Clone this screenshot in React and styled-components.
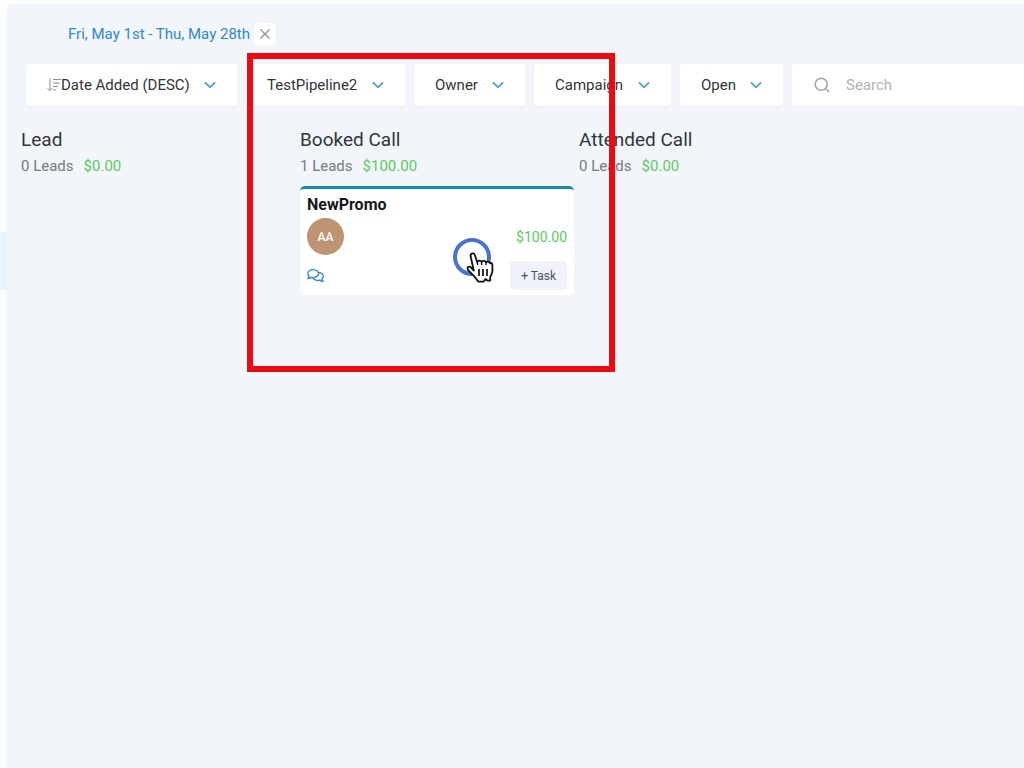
import React, { useState } from 'react';
import styled, { createGlobalStyle } from 'styled-components';
import { FaRegComments } from 'react-icons/fa';

const filters = [
    { id: 'sort', label: 'Sort by', value: 'Date Added (DESC)', sorted: true },
    { id: 'pipeline', label: 'Pipeline', value: 'TestPipeline2' },
    { id: 'owner', label: 'Owner', value: 'Owner' },
    { id: 'campaign', label: 'Campaign', value: 'Campaign' },
    { id: 'status', label: 'Status', value: 'Open' },
]

const stages = [
    { name: 'Lead', total: '$0.00', leads: [] },
    {
        name: 'Booked Call',
        total: '$100.00',
        leads: [{ id: 1, name: 'NewPromo', initials: 'AA', amount: '$100.00' }]
    },
    { name: 'Attended Call', total: '$0.00', leads: [] },
]

const SortIcon = () => (
    <svg width='14' height='14' viewBox='0 0 14 14' fill='none' stroke='#8d9196' aria-hidden='true'>
        <path d='M3 0.5V12.5M0.7 10.2L3 12.7L5.3 10.2' />
        <path d='M6 1.5H14M6 5H12.6M6 8.5H11M6 12H9' strokeWidth='1.2' />
    </svg>
)

const ChevronIcon = () => (
    <svg width='12' height='8' viewBox='0 0 12 8' fill='none' stroke='#4b9bd4' strokeWidth='1.7' aria-hidden='true'>
        <path d='M1 1.3L6 6.3L11 1.3' />
    </svg>
)

const CloseIcon = () => (
    <svg width='10' height='10' viewBox='0 0 10 10' stroke='#8f8f8f' strokeWidth='1.3' aria-hidden='true'>
        <path d='M0.5 0.5L9.5 9.5M9.5 0.5L0.5 9.5' />
    </svg>
)

const SearchIcon = () => (
    <svg width='16' height='16' viewBox='0 0 16 16' fill='none' stroke='#a3a3a3' strokeWidth='1.5' aria-hidden='true'>
        <circle cx='7.2' cy='7.2' r='6' />
        <path d='M11.5 11.5L15.2 15' />
    </svg>
)

const HandIcon = () => (
    <svg width='28' height='32' viewBox='0 0 28 32' aria-hidden='true'>
        <path
            d='M7.8 19.6L4.6 5C4.2 2 8 1.4 8.8 4L11.2 11.2C12.2 9 15 9.2 15.6 11C17 9.2 19.4 9.8 20 11.4C21.6 10 23.8 10.8 24 12.4C25.4 11.4 26.4 12.4 26.4 14.2V20C26.4 23 24.4 24.6 24.2 26.6V29.6H21.4L19.6 28L17.8 30.6H12.4L10.6 28.4C9 25.4 5 22.4 1.8 18.6C0.4 16 3.4 14.6 5.2 16.6L7.8 19.6Z'
            fill='#fff'
            stroke='#111'
            strokeWidth='1.8'
            strokeLinejoin='round'
            strokeLinecap='round'
        />
        <path d='M11.2 11.2L11.8 14M15.6 11V14M20 11.4V14' stroke='#111' strokeWidth='1.4' />
        <path d='M13 18V25M17 18V25M21 18V25' stroke='#111' strokeWidth='1.7' />
    </svg>
)

const Filter = ({ id, label, value, sorted }) => (
    <FilterBox>
        {sorted && <SortIcon />}
        <select id={id} aria-label={label} defaultValue={value}>
            <option>{value}</option>
        </select>
        <ChevronIcon />
    </FilterBox>
)

const LeadCard = ({ lead }) => (
    <Card>
        <h3>{lead.name}</h3>
        <CardRow>
            <Avatar>{lead.initials}</Avatar>
            <Amount $small>{lead.amount}</Amount>
        </CardRow>
        <CardRow>
            <ChatButton type='button' aria-label='Messages'><FaRegComments size={17} /></ChatButton>
            <TaskButton type='button'>+ Task</TaskButton>
        </CardRow>
    </Card>
)

const App = () => {
    const [search, setSearch] = useState('')

    return (
        <>
            <GlobalStyle />
            <Page>
                <Sidebar><a href='#opportunities' aria-label='Opportunities' /></Sidebar>
                <Main>
                    <DateRange>
                        <a href='#dates'>Fri, May 1st - Thu, May 28th</a>
                        <button type='button' aria-label='Clear dates'><CloseIcon /></button>
                    </DateRange>
                    <Toolbar>
                        {filters.map(e => <Filter key={e.id} {...e} />)}
                        <SearchBox>
                            <SearchIcon />
                            <input
                                type='text'
                                aria-label='Search'
                                placeholder='Search'
                                value={search}
                                onChange={(e) => setSearch(e.currentTarget.value)}
                            />
                        </SearchBox>
                    </Toolbar>
                    <Board>
                        {stages.map(stage => (
                            <Stage key={stage.name}>
                                <h2>{stage.name}</h2>
                                <Summary>
                                    <span>{stage.leads.length} Leads</span>
                                    <Amount>{stage.total}</Amount>
                                </Summary>
                                {stage.leads.map(lead => <LeadCard key={lead.id} lead={lead} />)}
                            </Stage>
                        ))}
                    </Board>
                </Main>
                <Highlight />
                <ClickRing />
                <Pointer><HandIcon /></Pointer>
            </Page>
        </>
    )
}

export default App

const GlobalStyle = createGlobalStyle`
    * {
        box-sizing: border-box;
    }

    body {
        margin: 0;
        font-family: Roboto, "Liberation Sans", sans-serif;
        color: #30353a;
    }

    h2, h3 {
        margin: 0;
    }

    button, input, select {
        font: inherit;
        color: inherit;
        border: none;
        outline: none;
        padding: 0;
        background: none;
    }
`

const Page = styled.div`
    position: relative;
    display: flex;
    min-height: 100vh;
    border-top: 4px solid #fcfefe;
    background-color: #f2f6fa;
    overflow: hidden;
`

const Sidebar = styled.nav`
    flex: 0 0 7px;
    padding-top: 228px;
    background-color: #fcfefe;

    a {
        display: block;
        height: 58px;
        background-color: #e6f3fe;
    }
`

const Main = styled.main`
    flex: 1;
    min-width: 0;
    padding: 18px 0 0 14px;
`

const DateRange = styled.div`
    display: flex;
    align-items: center;
    gap: 4px;
    padding-left: 47px;
    font-size: 15px;
    line-height: 24px;

    a {
        color: #2f86d2;
        text-decoration: none;
    }

    button {
        display: flex;
        justify-content: center;
        align-items: center;
        width: 22px;
        height: 22px;
        border-radius: 4px;
        background-color: #fff;
    }
`

const Toolbar = styled.div`
    display: flex;
    gap: 9px;
    padding: 18px 0 0 5px;
`

const FilterBox = styled.div`
    display: flex;
    align-items: center;
    flex: none;
    height: 42px;
    padding: 0 21px;
    border-radius: 4px;
    background-color: #fff;
    box-shadow: 0 1px 2px rgba(40, 60, 80, 0.04);
    font-size: 15px;

    select {
        appearance: none;
        margin-right: 14px;
        line-height: 20px;
    }
`

const SearchBox = styled.div`
    display: flex;
    align-items: center;
    flex: 1;
    min-width: 0;
    gap: 16px;
    height: 42px;
    padding-left: 22px;
    border-radius: 4px 0 0 4px;
    background-color: #fff;
    box-shadow: 0 1px 2px rgba(40, 60, 80, 0.04);
    font-size: 15px;

    svg {
        flex: none;
    }

    input {
        flex: 1;
        min-width: 0;
    }

    input::placeholder {
        color: #b2b2b2;
    }
`

const Board = styled.div`
    display: flex;
    gap: 5px;
    padding-top: 22px;
`

const Stage = styled.section`
    flex: 0 0 274px;

    h2 {
        font-size: 19px;
        font-weight: 400;
        line-height: 24px;
    }
`

const Summary = styled.div`
    display: flex;
    gap: 10px;
    font-size: 15px;
    line-height: 28px;
    color: #747a81;
`

const Amount = styled.span`
    color: #5acb60;
    font-size: ${props => props.$small ? '14px' : '15px'};
`

const Card = styled.article`
    display: flex;
    flex-direction: column;
    margin-top: 6px;
    padding: 4px 7px 5px;
    border-top: 3px solid #168aad;
    border-radius: 5px;
    background-color: #fff;

    h3 {
        margin-bottom: 1px;
        font-size: 16px;
        font-weight: 700;
        line-height: 24px;
        color: #16181b;
    }
`

const CardRow = styled.div`
    display: flex;
    justify-content: space-between;
    align-items: center;

    & + & {
        margin-top: 6px;
    }
`

const Avatar = styled.div`
    display: flex;
    justify-content: center;
    align-items: center;
    width: 37px;
    height: 37px;
    border-radius: 50%;
    background-color: #bf9471;
    color: #fff;
    font-size: 12px;
    font-weight: 500;
`

const ChatButton = styled.button`
    display: flex;
    color: #3c91d2;
`

const TaskButton = styled.button`
    height: 29px;
    padding: 0 11px;
    border-radius: 4px;
    background-color: #eff3f9;
    font-size: 12px;
    color: #4d5358;
`

// Overlay marks drawn above the board
const Highlight = styled.div`
    position: absolute;
    top: 49px;
    left: 247px;
    width: 368px;
    height: 319px;
    border: 6px solid #ec0c10;
    pointer-events: none;
`

const ClickRing = styled.div`
    position: absolute;
    top: 234px;
    left: 453px;
    width: 38px;
    height: 38px;
    border: 4px solid #4a72cf;
    border-radius: 50%;
    pointer-events: none;
`

const Pointer = styled.div`
    position: absolute;
    top: 247px;
    left: 466px;
    pointer-events: none;
`
